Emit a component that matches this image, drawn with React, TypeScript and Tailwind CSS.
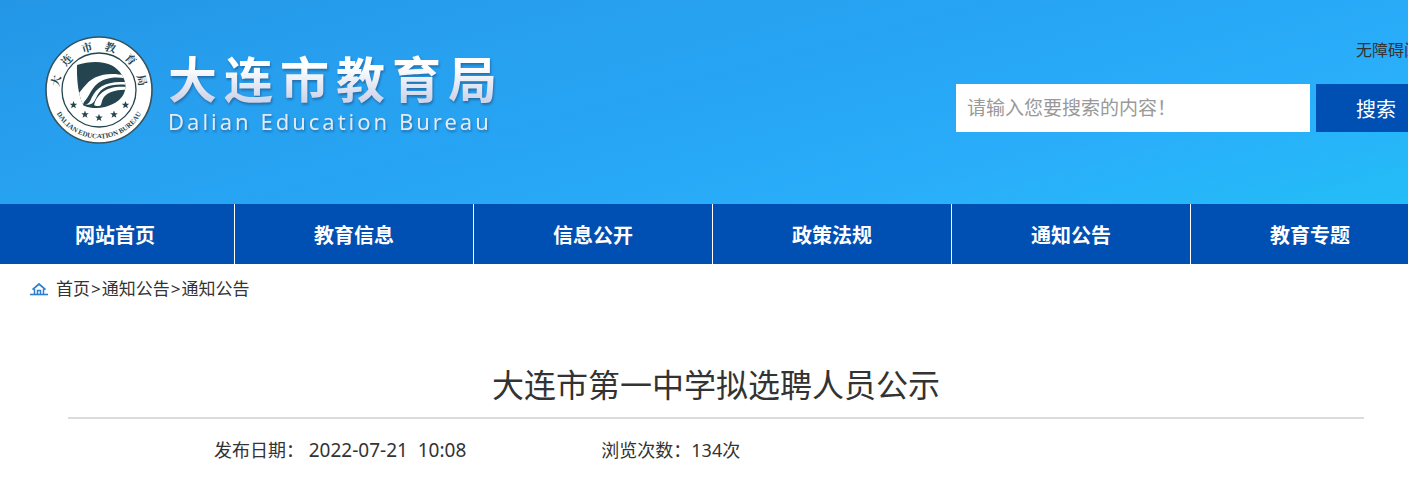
const navItems = ["网站首页", "教育信息", "信息公开", "政策法规", "通知公告", "教育专题"];

const nameChars = ["大", "连", "市", "教", "育", "局"];

const stars = [
  { x: 28.5, y: 69 },
  { x: 40, y: 78.5 },
  { x: 54, y: 81.7 },
  { x: 69, y: 78.5 },
  { x: 80.5, y: 69 },
];

function Emblem() {
  return (
    <svg viewBox="0 0 108 108" className="size-[108px] shrink-0" role="img" aria-label="大连市教育局徽标">
      <defs>
        <path id="ring-bottom" d="M5.5 54a48.5 48.5 0 0 0 97 0" />
        <path id="star" d="M0-4 1-1.3 3.8-1.2 1.6.5 2.4 3.3 0 1.7-2.4 3.3-1.6.5-3.8-1.2-1-1.3Z" />
        <clipPath id="shield">
          <path d="M32 29C44 25 58 24.5 67 29.5C75 34 81 43 80.5 51C80 62 70 68.5 60 71C53 72.6 46 72.6 38.5 69.5C33.5 60 31.6 46 32 29Z" />
        </clipPath>
      </defs>
      <circle cx="54" cy="54" r="53" fill="#fff" stroke="#34535f" strokeWidth="1.6" />
      <circle cx="54" cy="54" r="37" fill="none" stroke="#24454f" strokeWidth="1.3" />
      <g clipPath="url(#shield)">
        <rect x="30" y="22" width="54" height="54" fill="#24454f" />
        <path d="M29 56L34 57C40 50 43 45 50 41.5C60 37 70 37 84 40V43C70 40 59 42 52 48C46 53 44 61 39 66L37 71H29Z" fill="#fff" />
        <path d="M40 68C44 69 45 65 47 61C52 51 62 44 84 46.5V49C66 47 57 51 52.5 59C50.500 63 49 67 46 68C44 69 42 69 40 68Z" fill="#fff" />
        <path d="M49 69C50 64 53 60 57 56.500C63 51.500 71 50 84 51V54C72 53 63 56 59 61C56 65 57 70 54 70C52 70 50 70 49 69Z" fill="#fff" />
      </g>
      <g fill="#24454f">
        {stars.map((s) => (
          <use key={s.x} href="#star" x={s.x} y={s.y} />
        ))}
      </g>
      <g fill="#24454f" textAnchor="middle">
        {nameChars.map((char, i) => (
          <text
            key={char}
            x="54"
            y="14"
            fontSize="11"
            className="font-['Noto_Serif_CJK_SC','Noto_Sans_CJK_SC',serif] font-bold"
            transform={`rotate(${-78 + i * 31} 54 54)`}
          >
            {char}
          </text>
        ))}
        <text fontSize="7" className="font-['Liberation_Serif',serif] font-bold">
          <textPath href="#ring-bottom" startOffset="50%">
            DALIAN EDUCATION BUREAU
          </textPath>
        </text>
      </g>
    </svg>
  );
}

function HomeIcon() {
  return (
    <svg viewBox="0 0 18 13" className="h-[13px] w-[18px]" fill="none" stroke="#2b7fce" aria-hidden>
      <path d="M0 11.5H18" strokeWidth="1.6" />
      <path d="M2.500 6.600 9 1 15.500 6.600" strokeWidth="1.8" />
      <path d="M4.500 6V11.500M13.500 6V11.500M7.500 11.500V7.500H10.500V11.500" strokeWidth="1.5" />
    </svg>
  );
}

function Brand() {
  return (
    <a href="#" className="flex items-center gap-[15px]">
      <Emblem />
      <div className="pt-1 drop-shadow-[1px_2px_1px_rgba(30,80,130,0.6)]">
        <div className="flex gap-[7px] bg-linear-to-b from-white from-30% to-[#cfd5ea] to-85% bg-clip-text text-[49px] leading-[58px] font-bold text-transparent">
          {nameChars.map((char) => (
            <span key={char}>{char}</span>
          ))}
        </div>
        <div className="text-[22px] leading-[26px] tracking-[3px] text-[#e3eaf7]">
          Dalian Education Bureau
        </div>
      </div>
    </a>
  );
}

function SearchForm() {
  return (
    <form className="flex gap-1.5" onSubmit={(e) => e.preventDefault()}>
      <input
        type="text"
        aria-label="搜索"
        placeholder="请输入您要搜索的内容！"
        className="h-12 w-[354px] bg-white px-[11px] text-[19px] text-[#333] outline-none placeholder:text-[#999]"
      />
      <button type="submit" className="h-12 bg-[#0050b3] px-10 pt-1 text-[20px] text-white">
        搜索
      </button>
    </form>
  );
}

export default function App() {
  return (
    <div className="overflow-hidden bg-white font-['Noto_Sans','Noto_Sans_CJK_SC',sans-serif] text-[#333]">
      <header className="bg-[linear-gradient(165deg,#2396e6_0%,#279fee_25%,#26a5f4_50%,#2aaefa_75%,#23bdf7_100%)]">
        <div className="-mr-7 flex h-[204px] justify-between pl-[45px]">
          <div className="pt-9">
            <Brand />
          </div>
          <div className="flex flex-col gap-[22px] pt-[38px]">
            <a href="#" className="self-end text-[16px] leading-6">
              无障碍阅读
            </a>
            <SearchForm />
          </div>
        </div>
      </header>

      <nav className="bg-[#0050b3]">
        <ul className="-mr-[22px] -ml-1 flex">
          {navItems.map((item) => (
            <li key={item} className="flex-1 border-r border-white">
              <a href="#" className="block pt-1 text-center text-[20px] leading-[56px] font-bold text-white">
                {item}
              </a>
            </li>
          ))}
        </ul>
      </nav>

      <div className="flex items-center gap-2 px-[30px] pt-3 text-[17px] leading-[26px]">
        <HomeIcon />
        <div className="flex gap-px">
          <a href="#">首页</a>
          <span>&gt;</span>
          <a href="#">通知公告</a>
          <span>&gt;</span>
          <a href="#">通知公告</a>
        </div>
      </div>

      <main className="mr-11 ml-[68px] pt-[59px]">
        <h1 className="border-b-2 border-[#dcdcdc] pb-2 text-center text-[32px] leading-[48px]">
          大连市第一中学拟选聘人员公示
        </h1>
        <div className="flex gap-[135px] px-[146px] py-4 text-[18px] leading-[30px]">
          <p className="whitespace-pre">
            发布日期： <time className="text-[19px]">2022-07-21  10:08</time>
          </p>
          <p>浏览次数：134次</p>
        </div>
      </main>
    </div>
  );
}
